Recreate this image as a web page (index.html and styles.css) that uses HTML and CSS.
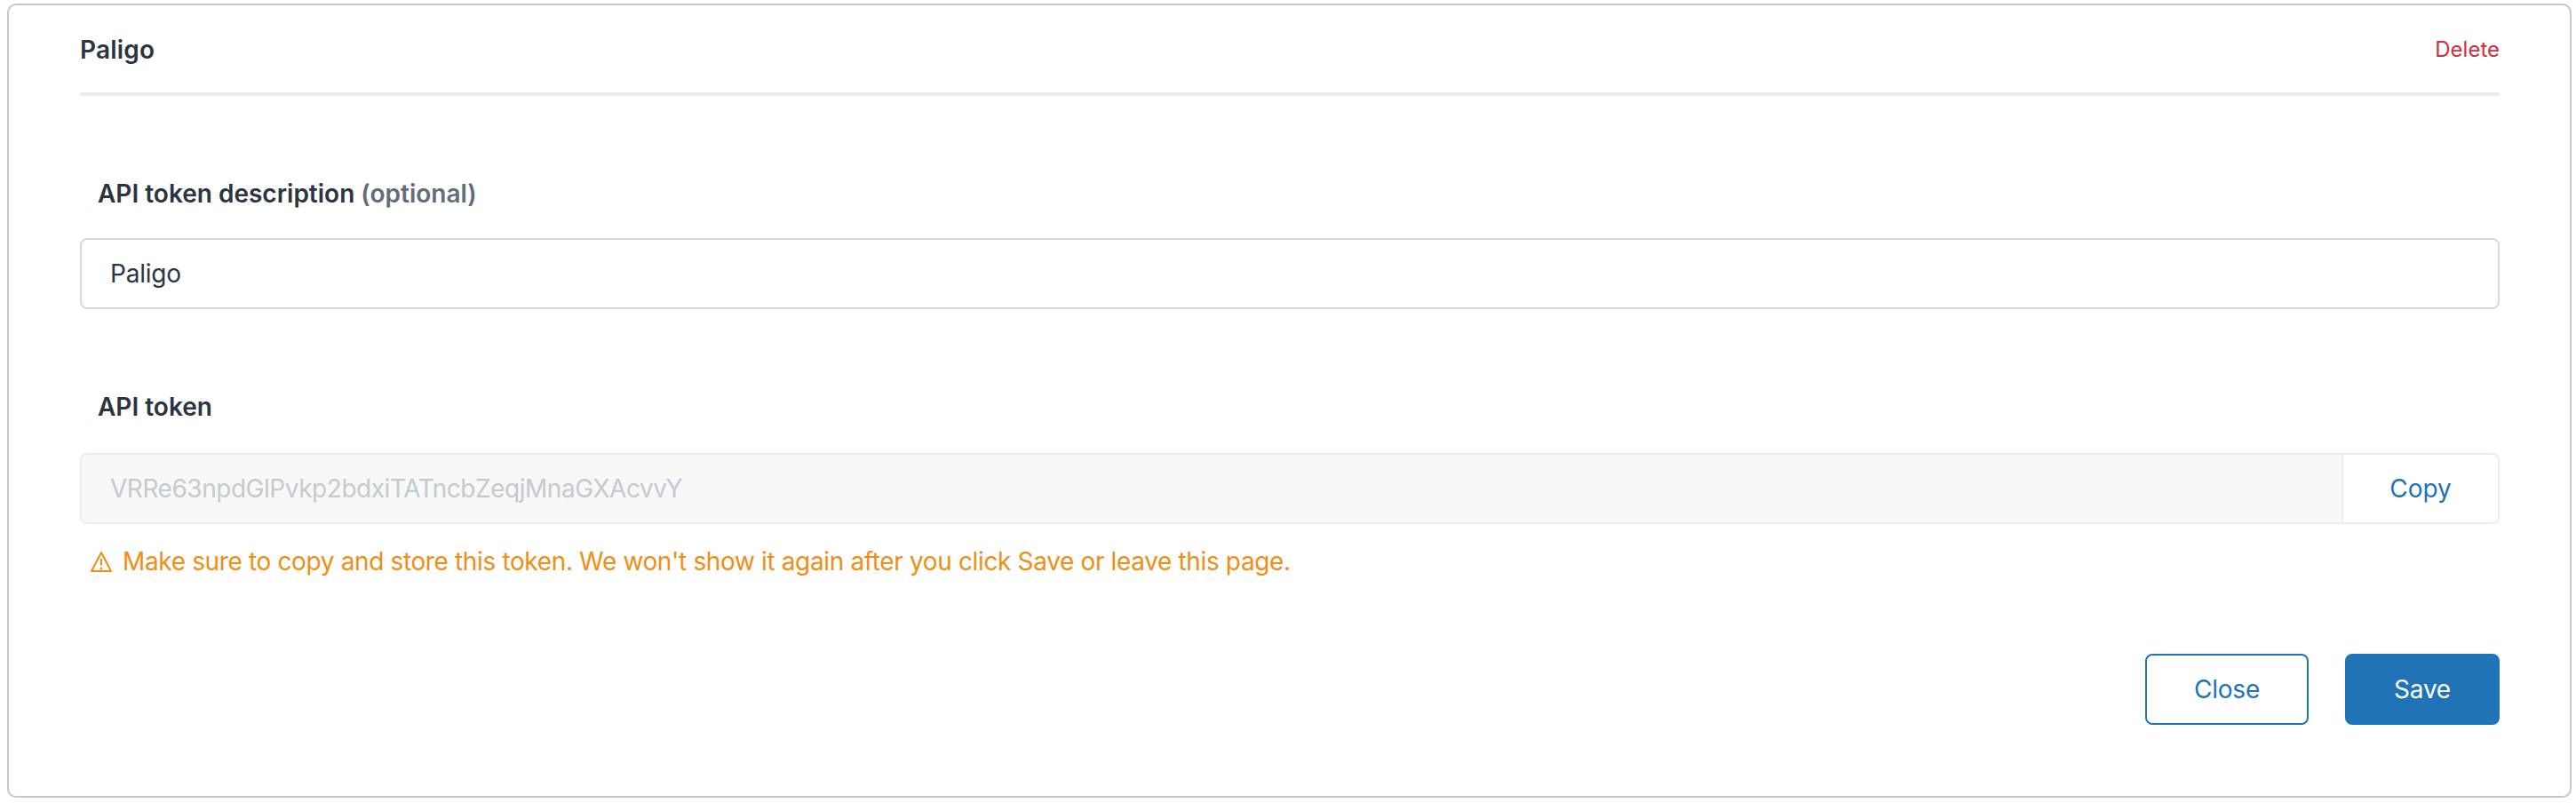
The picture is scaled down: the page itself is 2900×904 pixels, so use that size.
FILE: index.html
```html
<!DOCTYPE html>
<html>
<head>
  <title>Paligo</title>
  <meta charset="UTF-8">
  <link rel="stylesheet" href="styles.css">
</head>
<body>
  <div class="card">
    <div class="card-header">
      <h2>Paligo</h2>
      <a class="delete-link" href="#">Delete</a>
    </div>

    <label class="field-label" for="description-input">API token description <span class="optional">(optional)</span></label>
    <input id="description-input" class="text-input" value="Paligo">

    <label class="field-label token-label" for="token-input">API token</label>
    <div class="token-group">
      <input id="token-input" class="token-input" value="VRRe63npdGlPvkp2bdxiTATncbZeqjMnaGXAcvvY" readonly>
      <button class="copy-button">Copy</button>
    </div>
    <p class="warning">
      <svg class="warning-icon" viewBox="0 0 24 24" width="24" height="24" fill="none" stroke="currentColor" stroke-width="2" stroke-linejoin="round">
        <path d="M12 2 L23 23 H1 Z"/>
        <path d="M12 9 V16.5"/>
        <circle cx="12" cy="20" r="0.6"/>
      </svg>
      Make sure to copy and store this token. We won't show it again after you click Save or leave this page.
    </p>

    <div class="actions">
      <button class="button button-outline">Close</button>
      <button class="button button-primary">Save</button>
    </div>
  </div>
</body>
</html>
```

FILE: styles.css
```css
html {
  background: white;
}
body {
  margin: 0;
  padding: 4px 5px 6px 8px;
  font: 28px/40px Inter, "Liberation Sans", sans-serif;
  color: #2b3540;
}
.card {
  height: 894px;
  box-sizing: border-box;
  padding: 30px 79px 0 80px;
  border: 2px solid #c1c7cd;
  border-radius: 10px;
}
.card-header {
  display: flex;
  justify-content: space-between;
  height: 68px;
  border-bottom: 4px solid #ebebeb;
}
.card-header h2 {
  margin: 0;
  font-size: 28px;
  font-weight: 600;
  letter-spacing: 0.2px;
}
.delete-link {
  font-size: 24px;
  color: #cf3040;
  text-decoration: none;
}
.field-label {
  display: block;
  margin: 90px 0 30px;
  padding-left: 20px;
  font-weight: 600;
}
.token-label {
  margin-bottom: 32px;
}
.optional {
  color: #626d7a;
}
.text-input {
  display: block;
  width: 100%;
  height: 80px;
  box-sizing: border-box;
  padding: 0 32px;
  font: inherit;
  letter-spacing: -0.2px;
  color: inherit;
  border: 2px solid #d5d9dc;
  border-radius: 8px;
}
.token-group {
  display: flex;
  height: 80px;
  box-sizing: border-box;
  border: 2px solid #ebeded;
  border-radius: 8px;
  overflow: hidden;
}
.token-input {
  flex: 1;
  min-width: 0;
  padding: 0 32px;
  font: inherit;
  letter-spacing: -0.46px;
  color: #c5cad0;
  background: #f7f8f8;
  border: none;
  border-right: 2px solid #ebeded;
}
.copy-button {
  width: 174px;
  padding: 0;
  font: inherit;
  color: #2073b6;
  background: white;
  border: none;
}
.warning {
  display: flex;
  align-items: center;
  gap: 12px;
  margin: 22px 0 0;
  padding-left: 12px;
  letter-spacing: -0.36px;
  color: #ee8e15;
}
.warning-icon {
  flex: none;
}
.actions {
  display: flex;
  justify-content: flex-end;
  gap: 41px;
  margin-top: 84px;
}
.button {
  height: 80px;
  box-sizing: border-box;
  padding: 0;
  font: inherit;
  letter-spacing: -0.2px;
  border-radius: 8px;
}
.button-outline {
  width: 184px;
  color: #2073b6;
  background: white;
  border: 2px solid #2073b6;
}
.button-primary {
  width: 174px;
  color: white;
  background: #2073b6;
  border: 2px solid #2073b6;
}
```
